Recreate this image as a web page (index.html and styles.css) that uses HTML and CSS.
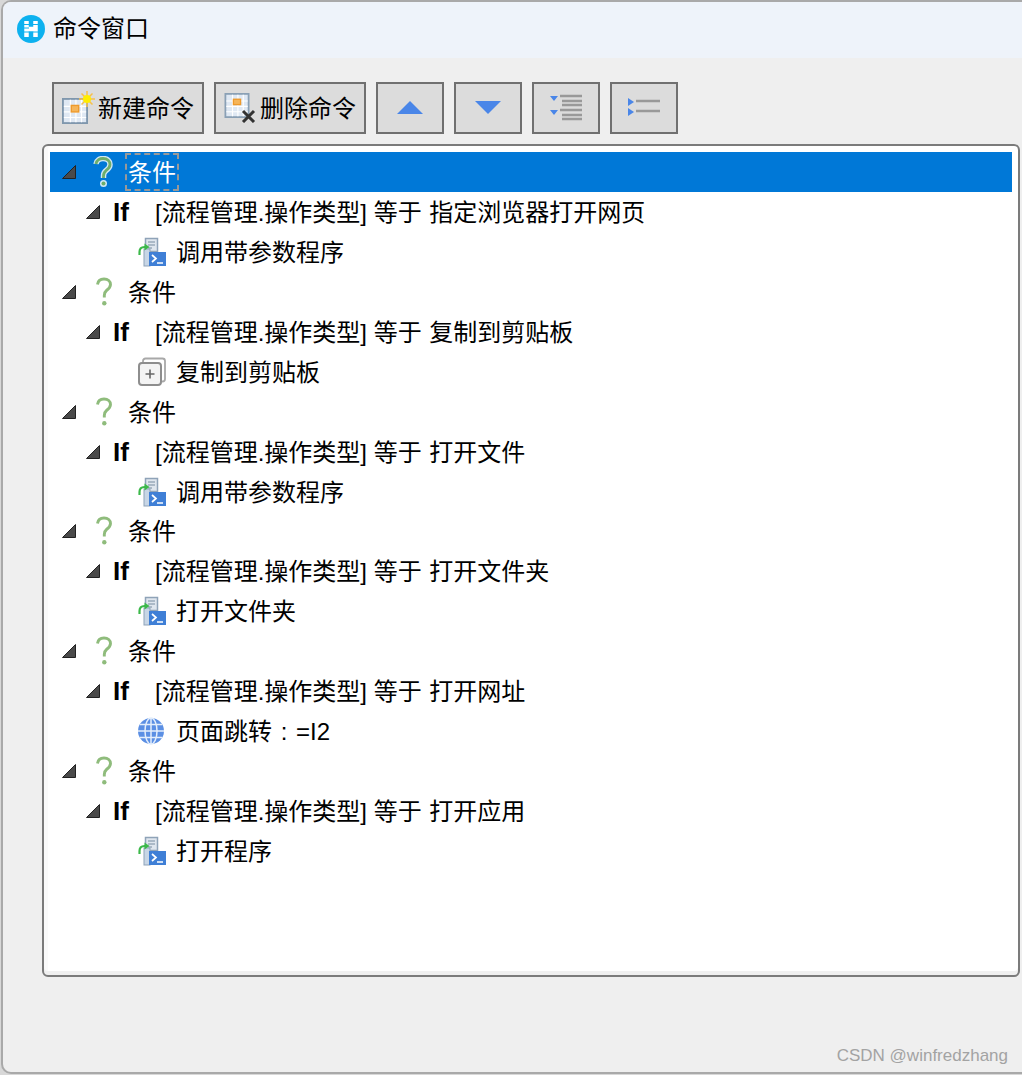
FILE: index.html
```html
<!DOCTYPE html>
<html lang="zh">
<head>
<meta charset="utf-8">
<title>命令窗口</title>
<link rel="stylesheet" href="styles.css">
</head>
<body>
<svg class="defs" width="0" height="0" aria-hidden="true">
  <defs>
    <symbol id="toggle" viewBox="0 0 14 14"><polygon points="13.5,0.5 13.5,13.5 0.5,13.5" fill="#4a4a4a" stroke="#222" stroke-width="1"/></symbol>
    <symbol id="q" viewBox="0 0 20 30">
      <path d="M3.500 7.500C4 3.500 7 2 10 2c4 0 6.500 2.200 6.500 5.500 0 3-2 4.500-4 6-1.500 1.200-2.200 2.500-2.200 5v2" fill="none" stroke="#8fbc7c" stroke-width="2.900"/>
      <circle cx="10.300" cy="26.300" r="2.200" fill="#8fbc7c"/>
    </symbol>
    <symbol id="q-sel" viewBox="0 0 22 32">
      <path d="M4 8C4.500 4 8 2.500 11 2.500c4.500 0 7 2.500 7 6 0 3.200-2.200 4.800-4.200 6.300-1.600 1.200-2.300 2.600-2.300 5.200v2" fill="none" stroke="#cfe8f6" stroke-width="5.500"/>
      <circle cx="11.500" cy="27.500" r="3.500" fill="#cfe8f6"/>
      <path d="M4 8C4.500 4 8 2.500 11 2.500c4.500 0 7 2.500 7 6 0 3.200-2.200 4.800-4.200 6.300-1.600 1.200-2.300 2.600-2.300 5.200v2" fill="none" stroke="#6fae6a" stroke-width="2.800"/>
      <circle cx="11.500" cy="27.500" r="2" fill="#6fae6a"/>
    </symbol>
    <symbol id="run" viewBox="0 0 30 30">
      <path d="M8.500 1.500h12v13h-12z" fill="#dfe6ee" stroke="#8fa3b8" stroke-width="1.500"/>
      <path d="M11 5h7M11 8h7M11 11h4" stroke="#9aaabb" stroke-width="1.500"/>
      <rect x="7" y="12" width="6" height="17" fill="#c8d6e6" stroke="#8fa3b8"/>
      <rect x="12" y="15" width="17" height="14" fill="#3f7fd6"/>
      <path d="M15 18l4 3.500-4 3.500" fill="none" stroke="#fff" stroke-width="1.700"/>
      <path d="M20 26h6" stroke="#fff" stroke-width="1.500"/>
      <path d="M2.500 18v-3c0-3 2-5 5-5h1" fill="none" stroke="#3cb94a" stroke-width="2.200"/>
      <path d="M7.500 6.500l5 3.500-5 3.500z" fill="#3cb94a"/>
    </symbol>
    <symbol id="copy" viewBox="0 0 30 30">
      <path d="M6 5V4c0-1.500 1-2.500 2.500-2.500h17c1.500 0 2.500 1 2.500 2.500v18c0 1.500-1 2.500-2.500 2.500H25" fill="none" stroke="#a8a8a8" stroke-width="1.800"/>
      <rect x="2" y="6" width="22" height="22" rx="3" fill="#f4f4f4" stroke="#8e8e8e" stroke-width="2"/>
      <path d="M13 12.500v9M8.500 17h9" stroke="#666" stroke-width="1.600"/>
    </symbol>
    <symbol id="globe" viewBox="0 0 30 30">
      <circle cx="14" cy="15" r="13" fill="#5b8fe4"/>
      <g fill="none" stroke="#e4eefb" stroke-width="1.500">
        <ellipse cx="14" cy="15" rx="6" ry="13"/>
        <path d="M14 2v26M1 15h26M3 8.500h22M3 21.500h22"/>
      </g>
    </symbol>
    <symbol id="grid-new" viewBox="0 0 28 28">
      <rect x="1" y="1" width="26" height="26" fill="#dfe8f3" stroke="#7f97ad" stroke-width="2"/>
      <path d="M2 9h24M2 15h24M2 21h24M9 2v24M15 2v24M21 2v24" stroke="#fff" stroke-width="1.300"/>
      <rect x="10" y="8" width="8" height="7" fill="#f5b55a" stroke="#ee9a2c" stroke-width="1.500"/>
    </symbol>
    <symbol id="grid-del" viewBox="0 0 28 28">
      <rect x="1" y="1" width="26" height="26" fill="#dfe8f3" stroke="#8aa0b5" stroke-width="2"/>
      <path d="M2 9h24M2 15h24M2 21h24M9 2v24M15 2v24M21 2v24" stroke="#fff" stroke-width="1.300"/>
      <rect x="10" y="7" width="8" height="6" fill="#f5b55a" stroke="#ee9a2c" stroke-width="1.500"/>
    </symbol>
  </defs>
</svg>

<div class="window">
  <header class="titlebar">
    <svg class="app-icon" width="28" height="28" viewBox="0 0 28 28">
      <circle cx="14" cy="14" r="14" fill="#0db1ef"/>
      <path d="M9.500 6v16M18.500 6v16M9.500 14h9" fill="none" stroke="#fff" stroke-width="4.500"/>
      <path d="M7 9.500h5M7 13h5M7 17h5M16 9.500h5M16 17h5" stroke="#0db1ef" stroke-width="1"/>
    </svg>
    <span>命令窗口</span>
  </header>

  <div class="toolbar">
    <button class="btn btn-text" type="button">
      <svg class="icon-new" width="34" height="34" viewBox="0 0 34 34">
        <use href="#grid-new" x="0" y="7" width="26" height="26"/>
        <g stroke="#f7c04a" stroke-width="1.500"><path d="M25 0v16M17 8h16M19.500 2.500l11 11M30.500 2.500l-11 11"/></g>
        <circle cx="25" cy="8" r="4" fill="#ffee00"/>
      </svg>
      <span>新建命令</span>
    </button>
    <button class="btn btn-text" type="button">
      <svg class="icon-del" width="32" height="34" viewBox="0 0 32 34">
        <use href="#grid-del" x="0" y="4" width="26" height="25"/>
        <path d="M19 22l11 11M30 22L19 33" stroke="#333" stroke-width="3"/>
      </svg>
      <span>删除命令</span>
    </button>
    <button class="btn btn-icon" type="button">
      <svg width="26" height="14" viewBox="0 0 26 14"><polygon points="13,0 26,13 0,13" fill="#4a86e8"/></svg>
    </button>
    <button class="btn btn-icon" type="button">
      <svg width="26" height="14" viewBox="0 0 26 14"><polygon points="0,0 26,0 13,13" fill="#4a86e8"/></svg>
    </button>
    <button class="btn btn-icon" type="button">
      <svg width="32" height="28" viewBox="0 0 32 28">
        <path d="M0 2h8L4 7zM0 16h8l-4 5z" fill="#4a86e8"/>
        <path d="M10 2h22M12 7h20M12 11h20M10 16h22M12 21h20M12 25h20" stroke="#999" stroke-width="2.400"/>
      </svg>
    </button>
    <button class="btn btn-icon" type="button">
      <svg width="32" height="20" viewBox="0 0 32 20">
        <path d="M0 0l6 4-6 4zM0 10l6 4-6 4z" fill="#4a86e8"/>
        <path d="M8 3h24M8 13h24" stroke="#999" stroke-width="2.400"/>
      </svg>
    </button>
  </div>

  <div class="tree">
    <div class="row l1 selected">
      <svg class="tog"><use href="#toggle"/></svg>
      <svg class="q-sel"><use href="#q-sel"/></svg>
      <span class="focus">条件</span>
    </div>
    <div class="row l2"><svg class="tog"><use href="#toggle"/></svg><b>If</b><span class="txt">[流程管理.操作类型] 等于<span class="val">指定浏览器打开网页</span></span></div>
    <div class="row l3"><svg class="ico"><use href="#run"/></svg><span class="txt">调用带参数程序</span></div>

    <div class="row l1"><svg class="tog"><use href="#toggle"/></svg><svg class="q"><use href="#q"/></svg><span class="txt">条件</span></div>
    <div class="row l2"><svg class="tog"><use href="#toggle"/></svg><b>If</b><span class="txt">[流程管理.操作类型] 等于<span class="val">复制到剪贴板</span></span></div>
    <div class="row l3"><svg class="ico"><use href="#copy"/></svg><span class="txt">复制到剪贴板</span></div>

    <div class="row l1"><svg class="tog"><use href="#toggle"/></svg><svg class="q"><use href="#q"/></svg><span class="txt">条件</span></div>
    <div class="row l2"><svg class="tog"><use href="#toggle"/></svg><b>If</b><span class="txt">[流程管理.操作类型] 等于<span class="val">打开文件</span></span></div>
    <div class="row l3"><svg class="ico"><use href="#run"/></svg><span class="txt">调用带参数程序</span></div>

    <div class="row l1"><svg class="tog"><use href="#toggle"/></svg><svg class="q"><use href="#q"/></svg><span class="txt">条件</span></div>
    <div class="row l2"><svg class="tog"><use href="#toggle"/></svg><b>If</b><span class="txt">[流程管理.操作类型] 等于<span class="val">打开文件夹</span></span></div>
    <div class="row l3"><svg class="ico"><use href="#run"/></svg><span class="txt">打开文件夹</span></div>

    <div class="row l1"><svg class="tog"><use href="#toggle"/></svg><svg class="q"><use href="#q"/></svg><span class="txt">条件</span></div>
    <div class="row l2"><svg class="tog"><use href="#toggle"/></svg><b>If</b><span class="txt">[流程管理.操作类型] 等于<span class="val">打开网址</span></span></div>
    <div class="row l3"><svg class="ico"><use href="#globe"/></svg><span class="txt spaced">页面跳转 : =I2</span></div>

    <div class="row l1"><svg class="tog"><use href="#toggle"/></svg><svg class="q"><use href="#q"/></svg><span class="txt">条件</span></div>
    <div class="row l2"><svg class="tog"><use href="#toggle"/></svg><b>If</b><span class="txt">[流程管理.操作类型] 等于<span class="val">打开应用</span></span></div>
    <div class="row l3"><svg class="ico"><use href="#run"/></svg><span class="txt">打开程序</span></div>
  </div>
  <div class="watermark">CSDN @winfredzhang</div>
</div>
</body>
</html>
```

FILE: styles.css
```css
* { box-sizing: border-box; }
html, body { margin: 0; height: 100%; }
body {
  width: 1022px;
  height: 1075px;
  overflow: hidden;
  background: #d8d8d8;
  font-family: "Liberation Sans", "Noto Sans CJK SC", sans-serif;
  font-size: 24px;
  color: #000;
}
.defs { position: absolute; }
.window {
  position: relative;
  height: 1074px;
  margin-left: 1px;
  background: #efefef;
  border: 2px solid #a9a9a9;
  border-right: 0;
  border-radius: 10px 0 0 10px;
  overflow: hidden;
}
.titlebar {
  height: 56px;
  display: flex;
  align-items: center;
  gap: 8px;
  padding: 0 0 2px 14px;
  background: #eef3fa;
  line-height: 1;
}
.toolbar {
  display: flex;
  gap: 10px;
  margin: 24px 0 0 49px;
}
.btn {
  height: 52px;
  display: flex;
  align-items: center;
  justify-content: center;
  padding: 0;
  background: #dcdcdc;
  border: 2px solid #707070;
  font: inherit;
  color: #000;
}
.btn-text {
  width: 152px;
  justify-content: flex-start;
}
.btn-icon { width: 68px; }
.icon-new { margin: 0 2px 0 8px; }
.icon-del { margin: -4px 4px 0 8px; }
.btn-text span { line-height: 1; padding-top: 2px; }
.tree {
  width: 978px;
  height: 833px;
  margin: 10px 0 0 39px;
  padding: 6px;
  background: #fff;
  border: 2px solid #7b7b7b;
  border-radius: 6px;
  box-shadow: inset 0 -4px 0 #f0f0f0, inset 4px 0 0 #fafafa;
}
.row {
  position: relative;
  height: 39.95px;
  display: flex;
  align-items: center;
  white-space: nowrap;
  line-height: 1;
}
.txt { padding-top: 2px; }
.val { margin-left: 7.7px; }
.spaced { word-spacing: 2px; }
.selected { background: #0078d7; color: #fff; height: 40px; }
.tog { width: 14px; height: 14px; flex: none; }
.l1 { padding-left: 12px; }
.l1 .q { width: 20px; height: 30px; margin-left: 18px; margin-right: 14px; flex: none; }
.q-sel { width: 22px; height: 32px; margin-left: 16px; margin-right: 11px; flex: none; }
.focus {
  display: flex;
  align-items: center;
  height: 38px;
  padding: 2px 1px 0 1px;
  border: 2px dashed #999;
  border-radius: 1px;
}
.l2 { padding-left: 36px; }
.l2 b { width: 42px; margin-left: 13px; font-size: 26px; font-weight: 700; }
.l3 { padding-left: 87px; }
.ico { width: 30px; height: 30px; margin-right: 9px; flex: none; }
.watermark {
  position: absolute;
  right: 14px;
  bottom: 6px;
  font-size: 17px;
  line-height: 20px;
  color: #a3a3a3;
}
```
